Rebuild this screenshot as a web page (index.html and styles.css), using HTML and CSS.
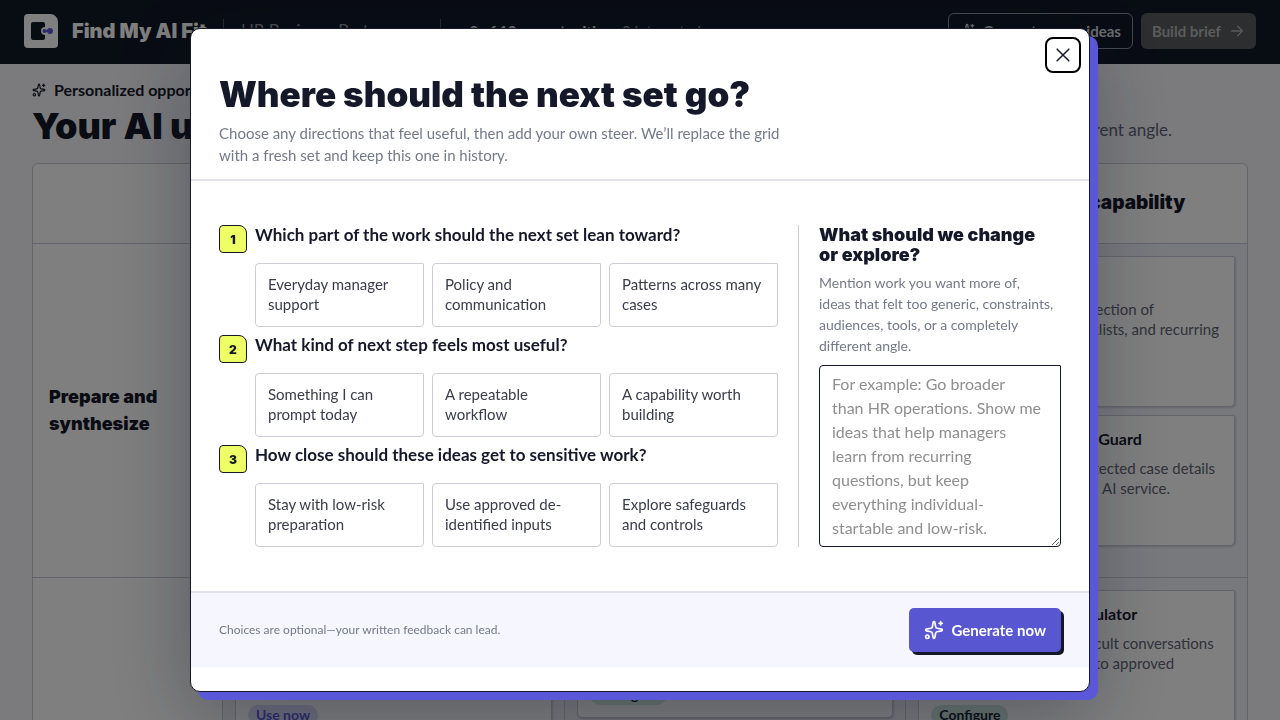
FILE: index.html
```html
<!DOCTYPE html>
<html lang="en">
<head>
<meta charset="utf-8">
<meta name="viewport" content="width=device-width, initial-scale=1">
<title>Find My AI Fit</title>
<link rel="stylesheet" href="styles.css">
</head>
<body>
<svg class="defs" aria-hidden="true">
  <symbol id="sparkles" viewBox="0 0 24 24">
    <path d="M11.017 2.814a1 1 0 0 1 1.966 0l1.051 5.558a2 2 0 0 0 1.594 1.594l5.558 1.051a1 1 0 0 1 0 1.966l-5.558 1.051a2 2 0 0 0-1.594 1.594l-1.051 5.558a1 1 0 0 1-1.966 0l-1.051-5.558a2 2 0 0 0-1.594-1.594l-5.558-1.051a1 1 0 0 1 0-1.966l5.558-1.051a2 2 0 0 0 1.594-1.594z"/>
    <path d="M20 2v4M22 4h-4"/>
    <circle cx="4" cy="20" r="2"/>
  </symbol>
</svg>

<div class="page">
  <header class="topbar">
    <svg class="logo" viewBox="0 0 34 34" aria-hidden="true">
      <path fill="#fff" d="M4 0h22a8 8 0 0 1 8 8v22a4 4 0 0 1-4 4H4a4 4 0 0 1-4-4V4a4 4 0 0 1 4-4z"/>
      <path fill="#111827" d="M9 8h10a2 2 0 0 1 2 2v3a4 4 0 0 0 0 8v3a2 2 0 0 1-2 2H9a2 2 0 0 1-2-2V10a2 2 0 0 1 2-2z"/>
      <path fill="none" stroke="#5b57d9" stroke-width="2" d="M20 17h6"/>
      <circle cx="20.500" cy="17" r="2" fill="#5b57d9"/>
      <circle cx="26" cy="17" r="3" fill="#5b57d9"/>
    </svg>
    <span class="brand">Find My AI Fit</span>
    <span class="crumb">HR Business Partner</span>
    <span class="crumb stats"><b>8 of 10 opportunities</b> · 0 interested</span>
    <button class="top-btn outline" type="button"><svg class="icon"><use href="#sparkles"/></svg>Generate more ideas</button>
    <button class="top-btn solid" type="button">Build brief
      <svg class="icon" viewBox="0 0 24 24"><path d="M4 12h16M13 5l7 7-7 7"/></svg>
    </button>
  </header>

  <main class="content">
    <p class="eyebrow"><svg class="icon"><use href="#sparkles"/></svg>Personalized opportunities</p>
    <div class="intro">
      <h1>Your AI use cases</h1>
      <p>Save what fits, or try a different angle.</p>
    </div>
    <div class="matrix">
      <div class="cell"></div>
      <div class="cell col-head">Start now</div>
      <div class="cell col-head">Build a workflow</div>
      <div class="cell col-head">Develop a shared capability</div>

      <div class="cell row-head">Prepare and<br>synthesize</div>
      <div class="cell lane"></div>
      <div class="cell lane"></div>
      <div class="cell lane">
        <article class="card tall">
          <h4>Knowledge Library</h4>
          <p>Create one approved collection of<br>templates, meeting checklists, and recurring<br>answers.</p>
          <span class="tag green">Configure</span>
        </article>
        <article class="card">
          <h4>Confidential Case Data Guard</h4>
          <p>Make certain that no protected case details<br>move into an unapproved AI service.</p>
          <span class="tag green">Configure</span>
        </article>
      </div>

      <div class="cell row-head"></div>
      <div class="cell lane"><article class="card late">
        <h4>Talking Points</h4><p>Prepare for a meeting.</p><span class="tag violet">Use now</span>
      </article></div>
      <div class="cell lane"><article class="card short">
        <h4>Case Workflow</h4><p>Organize case notes.</p><span class="tag green">Configure</span>
      </article></div>
      <div class="cell lane"><article class="card late">
        <h4>Hard Conversation Simulator</h4>
        <p>Rehearse answers in difficult conversations<br>with draft replies limited to approved<br>guidance.</p>
        <span class="tag green">Configure</span>
      </article></div>
    </div>
  </main>
</div>

<div class="backdrop">
  <section class="dialog" role="dialog" aria-modal="true" aria-labelledby="dialog-title">
    <button class="close" type="button" aria-label="Close"><svg viewBox="0 0 12 12"><path d="M1 1l10 10M11 1L1 11"/></svg></button>
    <header class="dialog-head">
      <h2 id="dialog-title">Where should the next set go?</h2>
      <p>Choose any directions that feel useful, then add your own steer. We’ll replace the grid<br>with a fresh set and keep this one in history.</p>
    </header>
    <div class="dialog-body">
      <div class="questions">
        <section class="question">
          <span class="num">1</span>
          <div>
            <h3>Which part of the work should the next set lean toward?</h3>
            <div class="options">
              <button type="button">Everyday manager<br>support</button>
              <button type="button">Policy and<br>communication</button>
              <button type="button">Patterns across many<br>cases</button>
            </div>
          </div>
        </section>
        <section class="question">
          <span class="num">2</span>
          <div>
            <h3>What kind of next step feels most useful?</h3>
            <div class="options">
              <button type="button">Something I can<br>prompt today</button>
              <button type="button">A repeatable<br>workflow</button>
              <button type="button">A capability worth<br>building</button>
            </div>
          </div>
        </section>
        <section class="question">
          <span class="num">3</span>
          <div>
            <h3>How close should these ideas get to sensitive work?</h3>
            <div class="options">
              <button type="button">Stay with low-risk<br>preparation</button>
              <button type="button">Use approved de-<br>identified inputs</button>
              <button type="button">Explore safeguards<br>and controls</button>
            </div>
          </div>
        </section>
      </div>
      <div class="steer">
        <label for="steer">What should we change<br>or explore?</label>
        <p id="steer-hint">Mention work you want more of,<br>ideas that felt too generic, constraints,<br>audiences, tools, or a completely<br>different angle.</p>
        <textarea id="steer" aria-describedby="steer-hint" placeholder="For example: Go broader&#10;than HR operations. Show me&#10;ideas that help managers&#10;learn from recurring&#10;questions, but keep&#10;everything individual-&#10;startable and low-risk."></textarea>
      </div>
    </div>
    <footer class="dialog-foot">
      <p>Choices are optional—your written feedback can lead.</p>
      <button class="generate" type="button"><svg class="icon"><use href="#sparkles"/></svg>Generate now</button>
    </footer>
  </section>
</div>
</body>
</html>
```
FILE: styles.css
```css
* { box-sizing: border-box; }
body {
  margin: 0;
  font-family: Lato, "Open Sans", sans-serif;
  font-size: 15px;
  color: #151829;
  background: #f6f7fb;
}
h1, h2, h3, h4, p { margin: 0; }
button, textarea { font-family: inherit; }
h1, h2, .brand, .num, .col-head, .row-head, .steer label {
  font-family: Inter, Lato, sans-serif;
  font-weight: 900;
}
.defs { position: absolute; width: 0; height: 0; }
.icon {
  width: 16px;
  height: 16px;
  flex: none;
  fill: none;
  stroke: currentColor;
  stroke-width: 2;
  stroke-linecap: round;
  stroke-linejoin: round;
}

.page { height: 100vh; overflow: hidden; }
.topbar {
  display: flex;
  align-items: center;
  height: 64px;
  padding: 0 24px 2px;
  background: #111827;
  color: #fff;
}
.logo { width: 34px; height: 34px; margin-right: 14px; }
.brand { font-size: 20px; margin-right: 16px; }
.crumb {
  padding: 0 47px 0 17px;
  border-left: 1px solid #4b5563;
  color: #9399a7;
  font-size: 17px;
  line-height: 24px;
}
.stats { padding: 0 0 0 28px; font-size: 15px; }
.stats b { color: #e5e7eb; }
.top-btn {
  display: flex;
  align-items: center;
  justify-content: center;
  gap: 8px;
  height: 36px;
  border-radius: 6px;
  font-size: 15px;
  font-weight: 700;
}
.outline { margin-left: auto; padding: 0 11px 0 10px; border: 1px solid #8b90a0; background: none; color: #d8dade; }
.solid { margin-left: 8px; padding: 0 11px; border: 0; background: #5a5c5f; color: #b4b6b9; }

.content { padding: 16px 32px 0; }
.eyebrow { display: flex; align-items: center; gap: 8px; font-size: 16px; font-weight: 700; line-height: 20px; }
.eyebrow .icon { width: 14px; height: 14px; }
.intro { display: flex; align-items: center; justify-content: space-between; height: 52px; padding-right: 76px; }
.intro h1 { font-size: 36px; line-height: 48px; }
.intro p { padding-top: 6px; font-size: 17px; color: #5f6675; }
.matrix {
  display: grid;
  grid-template-columns: 189px repeat(3, minmax(0, 1fr));
  grid-template-rows: 80px 334px auto;
  margin-top: 11px;
  border: 1px solid #c9cad8;
  border-bottom: 0;
  border-radius: 6px 6px 0 0;
  background: #fff;
}
.cell { border-bottom: 1px solid #c9cad8; }
.cell:not(:nth-child(4n + 1)) { border-left: 1px solid #c9cad8; }
.col-head { display: flex; align-items: center; padding: 0 0 2px 16px; font-size: 19px; }
.row-head { display: flex; align-items: center; padding: 0 0 2px 16px; font-size: 18px; line-height: 27px; }
.lane { display: flex; flex-direction: column; gap: 8px; padding: 12px; background: #f0f2fa; }
.card {
  min-height: 131px;
  padding: 12px 12px 10px;
  border: 1px solid #c9cad8;
  border-radius: 2px 2px 5px 5px;
  background: #fff;
  box-shadow: 1px 1px 2px #c9cad8;
}
.tall { min-height: 151px; }
.late { min-height: 148px; }
.short { min-height: 128px; }
.card h4 { font-size: 16px; font-weight: 700; line-height: 22px; }
.card p { margin-top: 8px; font-size: 15px; line-height: 20px; color: #5f6675; white-space: nowrap; }
.late p { min-height: 60px; }
.short p { min-height: 40px; }
.tag { display: inline-block; margin-top: 12px; padding: 0 8px; border-radius: 10px; font-size: 14px; font-weight: 700; line-height: 20px; }
.green { background: #cdeadd; }
.violet { background: #dcdcfb; color: #5b57d9; }

.backdrop {
  position: fixed;
  inset: 0;
  display: flex;
  align-items: center;
  justify-content: center;
  background: rgba(0, 0, 0, .5);
}
.dialog {
  position: relative;
  width: 900px;
  max-width: calc(100% - 32px);
  padding-bottom: 24px;
  border: 1px solid #151829;
  border-radius: 10px;
  background: #fff;
  box-shadow: 8px 8px 0 #5b57d9, 0 24px 80px rgba(17, 24, 39, .35);
}
.close {
  position: absolute;
  top: 8px;
  right: 8px;
  display: grid;
  place-items: center;
  width: 36px;
  height: 36px;
  padding: 0;
  border: 2px solid #000;
  border-radius: 8px;
  background: #fff;
}
.close svg { width: 14px; height: 14px; fill: none; stroke: #151829; stroke-width: 1.3; stroke-linecap: round; }
.dialog-head { padding: 44px 28px 13px; border-bottom: 2px solid #e4e4ec; }
.dialog-head h2 { font-size: 35px; line-height: 42px; }
.dialog-head p { margin-top: 7px; font-size: 15px; line-height: 22px; color: #747a88; }
.dialog-body { display: grid; grid-template-columns: 1fr 263px; gap: 20px; padding: 44px 28px; }
.questions { display: grid; gap: 8px; }
.question { display: grid; grid-template-columns: 28px 1fr; gap: 8px; }
.num {
  display: grid;
  place-items: center;
  height: 28px;
  border: 1px solid #151829;
  border-radius: 4px 8px 4px 4px;
  background: #eeff66;
  font-size: 12px;
}
.question h3 { font-size: 17px; font-weight: 700; line-height: 20px; }
.options { display: grid; grid-template-columns: repeat(3, 1fr); gap: 8px; margin-top: 18px; }
.options button {
  height: 64px;
  padding: 0 12px 2px;
  border: 1px solid #cdcdd6;
  border-radius: 4px 1px 4px 4px;
  background: #fff;
  color: #3a3d49;
  font-size: 15px;
  line-height: 20px;
  text-align: left;
}
.steer { display: flex; flex-direction: column; padding-left: 20px; border-left: 1px solid #cdcdda; }
.steer label { font-size: 18px; line-height: 20px; }
.steer p { margin: 7px 0 9px; font-size: 14px; line-height: 21px; color: #747a88; }
.steer textarea {
  flex: 1;
  width: 100%;
  min-height: 182px;
  padding: 6px 12px;
  border: 1px solid #151829;
  border-radius: 4px 1px 4px 4px;
  font-size: 16px;
  line-height: 24px;
  resize: vertical;
}
.steer textarea::placeholder { color: #8f8f8f; }
.dialog-foot {
  display: flex;
  align-items: center;
  justify-content: space-between;
  padding: 15px 28px;
  border-top: 2px solid #e0e1eb;
  background: #f6f7fe;
}
.dialog-foot p { padding-bottom: 2px; font-size: 12px; color: #747a88; }
.generate {
  display: flex;
  align-items: center;
  gap: 8px;
  height: 44px;
  padding: 0 15px;
  border: 0;
  border-radius: 5px;
  background: #5856d1;
  color: #fff;
  font-size: 15px;
  font-weight: 700;
  box-shadow: 3px 3px 0 #151829;
}
.generate .icon { width: 20px; height: 20px; }
```
